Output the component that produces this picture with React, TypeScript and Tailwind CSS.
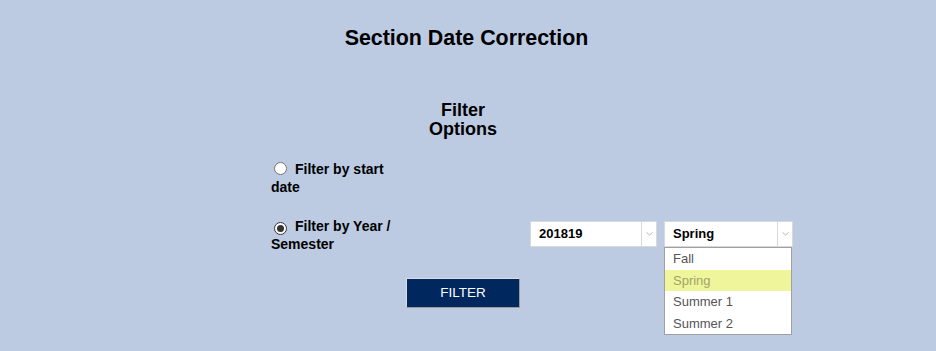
import React from "react";

function Radio({ checked }: { checked?: boolean }) {
  return (
    <span
      className={
        "inline-flex items-center justify-center w-[13px] h-[13px] rounded-full border bg-white align-[-1px] ml-[3px] mr-[8px] " +
        (checked ? "border-[#333]" : "border-[#767676]")
      }
    >
      {checked && <span className="block w-[7px] h-[7px] rounded-full bg-[#333]" />}
    </span>
  );
}

function Chevron() {
  return (
    <svg width="7" height="4" viewBox="0 0 7 4" className="block">
      <path d="M0.5 0.5 L3.5 3 L6.5 0.5" fill="none" stroke="#b5b5b5" strokeWidth="1" />
    </svg>
  );
}

function SelectBox({ value, width }: { value: string; width: string }) {
  return (
    <div className={"flex h-[26px] bg-white border border-[#d8d8d8] " + width}>
      <div className="flex-1 flex items-center pl-[8px] text-[13px] font-bold text-black">{value}</div>
      <div className="w-[15px] border-l border-[#d8d8d8] flex items-center justify-center">
        <Chevron />
      </div>
    </div>
  );
}

export default function App() {
  const options = ["Fall", "Spring", "Summer 1", "Summer 2"];
  return (
    <div
      className="w-[936px] h-[351px] bg-[#bccae2] overflow-hidden"
      style={{ fontFamily: '"Liberation Sans", Arial, sans-serif' }}
    >
      <h1 className="pt-[26px] text-center text-[21.4px] leading-[25px] font-bold text-black pr-[3px]">
        Section Date Correction
      </h1>

      <div className="ml-[271px] mt-[50px]">
        <div className="ml-[152px] w-[80px] text-center text-[18px] leading-[19px] font-bold text-black">
          Filter Options
        </div>

        <div className="mt-[21px] w-[135px] text-[14px] leading-[18px] font-bold text-black">
          <Radio />
          Filter by start date
        </div>

        <div className="mt-[21px] flex items-start">
          <div className="w-[135px] text-[14px] leading-[18px] font-bold text-black">
            <Radio checked />
            Filter by Year / Semester
          </div>
          <div className="ml-[124px] mt-[4px] flex gap-[7px]">
            <SelectBox value="201819" width="w-[127px]" />
            <div className="relative">
              <SelectBox value="Spring" width="w-[129px]" />
              <ul className="absolute left-0 top-[26px] w-[128px] bg-white border border-[#a0a0a0] text-[13px] leading-[21.5px] text-[#555]">
                {options.map((o) => (
                  <li
                    key={o}
                    className={
                      "pl-[8px] " + (o === "Spring" ? "bg-[#eef59a] text-[#a3a36a]" : "")
                    }
                  >
                    {o}
                  </li>
                ))}
              </ul>
            </div>
          </div>
        </div>

        <button className="mt-[25px] ml-[135px] w-[114px] h-[30px] bg-[#00285e] border border-t-[#dcdcdc] border-l-[#dcdcdc] border-b-[#9a9a9a] border-r-[#9a9a9a] text-white text-[13.5px] flex items-center justify-center">
          FILTER
        </button>
      </div>
    </div>
  );
}
